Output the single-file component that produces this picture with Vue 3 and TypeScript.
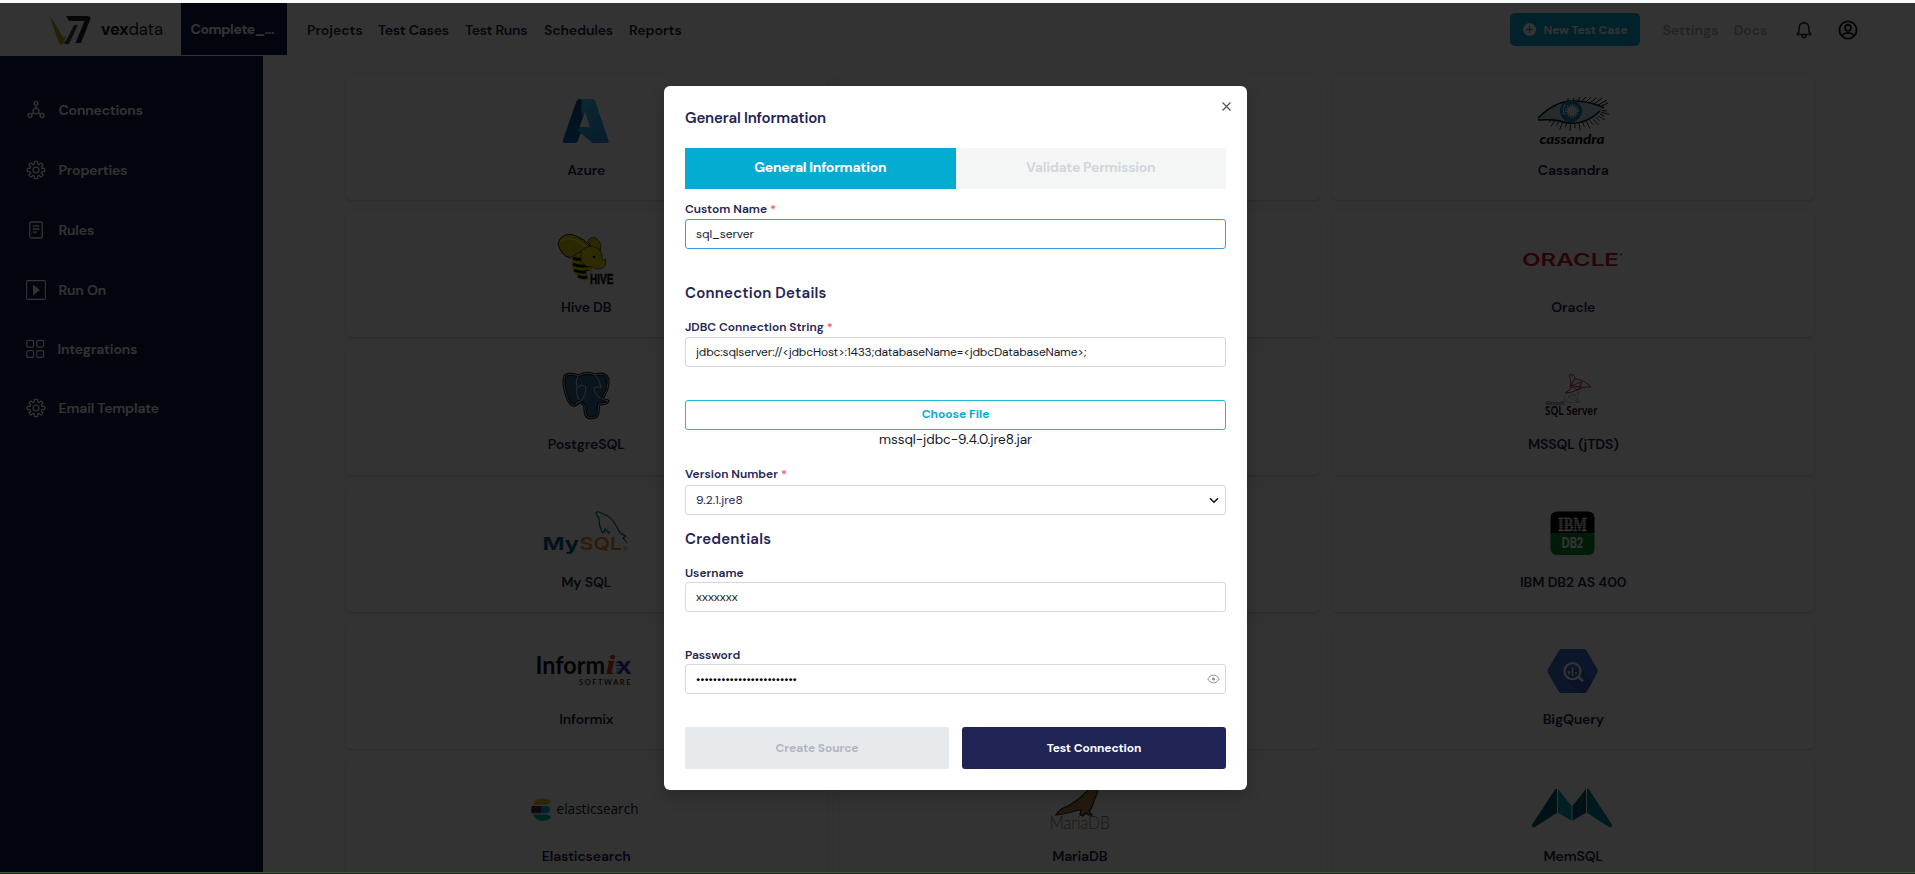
<script setup lang="ts">
import { ref } from 'vue'

interface NavItem {
  label: string
  width: number
  tracking: number
}

interface MenuItem {
  label: string
  icon: 'nodes' | 'gear' | 'doc' | 'play' | 'grid'
}

interface SourceCard {
  id: string
  label?: string
}

const nav: NavItem[] = [
  { label: 'Projects', width: 71, tracking: 0 },
  { label: 'Test Cases', width: 87, tracking: -0.2 },
  { label: 'Test Runs', width: 79, tracking: -0.25 },
  { label: 'Schedules', width: 85, tracking: -0.12 },
  { label: 'Reports', width: 60, tracking: 0 },
]

const menu: MenuItem[] = [
  { label: 'Connections', icon: 'nodes' },
  { label: 'Properties', icon: 'gear' },
  { label: 'Rules', icon: 'doc' },
  { label: 'Run On', icon: 'play' },
  { label: 'Integrations', icon: 'grid' },
  { label: 'Email Template', icon: 'gear' },
]

const cards: SourceCard[] = [
  { id: 'azure', label: 'Azure' },
  { id: 'blank1' },
  { id: 'cassandra', label: 'Cassandra' },
  { id: 'hive', label: 'Hive DB' },
  { id: 'blank2' },
  { id: 'oracle', label: 'Oracle' },
  { id: 'postgres', label: 'PostgreSQL' },
  { id: 'blank3' },
  { id: 'mssql', label: 'MSSQL (jTDS)' },
  { id: 'mysql', label: 'My SQL' },
  { id: 'blank4' },
  { id: 'db2', label: 'IBM DB2 AS 400' },
  { id: 'informix', label: 'Informix' },
  { id: 'blank5' },
  { id: 'bigquery', label: 'BigQuery' },
  { id: 'elastic', label: 'Elasticsearch' },
  { id: 'mariadb', label: 'MariaDB' },
  { id: 'memsql', label: 'MemSQL' },
]

const customName = ref('sql_server')
const jdbc = ref('jdbc:sqlserver://<jdbcHost>:1433;databaseName=<jdbcDatabaseName>;')
const version = ref('9.2.1.jre8')
const username = ref('xxxxxxx')
const password = ref('x'.repeat(24))

// Lower eyelashes fan out along the bottom lid.
const lashes = Array.from({ length: 17 }, (_, i) => {
  const a = (i / 16) * Math.PI * 0.72 + 0.1
  const x = 55 + Math.cos(a) * 29
  const y = 13 + Math.sin(a) * 14
  const len = i % 2 ? 8 : 5
  return `M${x.toFixed(1)} ${y.toFixed(1)}l${(Math.cos(a) * len).toFixed(1)} ${(Math.sin(a) * len).toFixed(1)}`
}).join('')

const gear = Array.from({ length: 8 }, (_, i) => {
  const p = (r: number, d: number) => {
    const a = ((i * 45 + d) * Math.PI) / 180
    return `${(10 + r * Math.cos(a)).toFixed(2)} ${(10 + r * Math.sin(a)).toFixed(2)}`
  }
  return `${i ? 'L' : 'M'}${p(6.4, -15)}L${p(8.6, -11)}Q${p(9, 0)} ${p(8.6, 11)}L${p(6.4, 15)}Q${p(5.6, 22.5)} ${p(6.4, 30)}`
}).join('') + 'Z'
</script>

<template>
  <div class="screen">
    <div class="top-strip"></div>
    <div class="page">
      <header class="header">
        <div class="brand">
          <svg width="42" height="30" viewBox="0 0 42 30">
            <path d="M0.5 1L5 7l9 15 3-1-2 7q-3 3-5 0Z" fill="#b3a61c" />
            <path d="M17 1H38q4.500 0 3 4L32 28h-5.500L35.500 6H20Z" fill="#20242c" />
            <path d="M25 10h4L20 29q-3 1-5-1l3-4Z" fill="#3b4048" />
          </svg>
          <span class="brand-name"><b>vex</b>data</span>
        </div>
        <div class="project">Complete_...</div>
        <nav class="nav">
          <span
            v-for="n in nav"
            :key="n.label"
            :style="{ width: n.width + 'px', letterSpacing: n.tracking + 'px' }"
          >{{ n.label }}</span>
        </nav>
        <div class="new-btn">
          <svg width="13" height="13" viewBox="0 0 13 13">
            <circle cx="6.5" cy="6.5" r="6.500" fill="#fff" />
            <path d="M6.500 3.200v6.600M3.200 6.500h6.600" stroke="#05acd1" stroke-width="1.200" />
          </svg>
          <span>New Test Case</span>
        </div>
        <span class="muted settings">Settings</span>
        <span class="muted docs">Docs</span>
        <svg class="bell" width="16" height="18" viewBox="0 0 16 18" fill="none" stroke="#1f2454" stroke-width="1.500" stroke-linejoin="round">
          <path d="M1 13.500h14q-2.200-2-2.200-4.500V6.600C12.800 3.500 10.700 2 8 2S3.200 3.500 3.200 6.600V9Q3.200 11.500 1 13.500ZM8 2V.5M6 14q0 2.700 2 2.700T10 14" />
        </svg>
        <svg class="user" width="20" height="20" viewBox="0 0 20 20" fill="none" stroke="#0b0f22" stroke-width="1.800">
          <circle cx="10" cy="10" r="8.600" /><circle cx="10" cy="7.800" r="3" /><path d="M4 16q1.500-3.200 6-3.200t6 3.200" />
        </svg>
      </header>

      <div class="body">
        <aside class="side">
          <div v-for="m in menu" :key="m.label" class="side-item" :class="m.icon">
            <svg width="20" height="20" viewBox="0 0 20 20" fill="none" stroke="#fff" stroke-width="1.300">
              <g v-if="m.icon === 'nodes'">
                <circle cx="10" cy="11" r="2.900" /><circle cx="10" cy="3.200" r="1.900" />
                <circle cx="4" cy="15.500" r="2" /><circle cx="16" cy="15.500" r="2" />
                <path d="M10 5.100V8M7.600 12.700l-2 1.500M12.400 12.700l2 1.500" />
              </g>
              <g v-else-if="m.icon === 'gear'">
                <path :d="gear" stroke-linejoin="round" /><circle cx="10" cy="10" r="2.900" />
              </g>
              <g v-else-if="m.icon === 'doc'">
                <rect x="3.700" y="2" width="12.600" height="16" rx="2" />
                <path d="M6.700 5.800h6.600M6.700 9h6.600M6.700 12.200h4.200" />
              </g>
              <g v-else-if="m.icon === 'play'">
                <rect x="0.600" y="0.600" width="18.800" height="18.800" rx="1.500" stroke-width="1.100" />
                <path d="M7 4.500L13.800 10 7 15.500Z" fill="#fff" stroke="none" />
              </g>
              <g v-else stroke-width="1.200">
                <rect x="0.800" y="1.300" width="6.800" height="6.800" rx="1.300" /><rect x="10.800" y="1.300" width="6.800" height="6.800" rx="1.300" />
                <rect x="0.800" y="11.600" width="6.800" height="6.800" rx="1.300" /><rect x="10.800" y="11.600" width="6.800" height="6.800" rx="1.300" />
              </g>
            </svg>
            <span>{{ m.label }}</span>
          </div>
        </aside>

        <main class="content">
          <div class="cards">
            <div v-for="c in cards" :key="c.id" class="card">
              <svg v-if="c.label" class="logo" width="110" height="56" viewBox="0 0 110 56">
                <g v-if="c.id === 'azure'">
                  <defs>
                    <linearGradient id="azA" x1="0.700" y1="0" x2="0.300" y2="1"><stop offset="0" stop-color="#114a8b" /><stop offset="1" stop-color="#0669bc" /></linearGradient>
                    <linearGradient id="azB" x1="0" y1="0" x2="0.500" y2="1"><stop offset="0" stop-color="#3ccbf4" /><stop offset="1" stop-color="#2892df" /></linearGradient>
                  </defs>
                  <path d="M48.500 3H62L47 44.500Q46 47 43.500 47H33.500Q31 47 31.800 44.500L45.500 5Q46.200 3 48.500 3Z" fill="url(#azA)" />
                  <path d="M45 31.500H65L62 46 46.500 35Q44 33 45 31.500Z" fill="#0078d4" />
                  <path d="M48 3H61.500Q63.500 3 64.200 5L77.500 44.500Q78.300 47 75.800 47H61.500L46.500 34 50 31h5.500L50 14 51 5Q50.500 3 48 3Z" fill="url(#azB)" />
                  <path d="M54 16L59 31H48.500Z" fill="#fff" />
                </g>
                <g v-else-if="c.id === 'cassandra'">
                  <path d="M20 22Q38 3 57 5Q75 6 85 12Q76 27 53 28Q38 27 30 24Z" fill="#b7dcee" />
                  <path d="M20 22Q38 4 57 5Q75 6 86 12M20 24Q40 23 45 26Q66 31 82 15" fill="none" stroke="#111" stroke-width="1.600" />
                  <path :d="lashes" stroke="#111" stroke-width="0.900" />
                  <path d="M64 5l4-4M68 6l5-5M72 7l6-5M76 8l8-6M80 9l9-5M83 10l7-3M60 5l2-4M55 5l1-3M50 5l0-3" stroke="#111" stroke-width="1" />
                  <circle cx="53" cy="15" r="11" fill="#1d7fb0" /><circle cx="54" cy="15" r="5" fill="#eee" />
                  <circle cx="54" cy="15" r="6" fill="none" stroke="#fff" stroke-width="2" stroke-dasharray="1 1.500" />
                  <path d="M47 8q-3 5-1 11" stroke="#fff" stroke-width="1" fill="none" />
                  <text x="21.500" y="48" font-family="Lato" font-weight="900" font-style="italic" font-size="14" textLength="65" lengthAdjust="spacingAndGlyphs" fill="#111">cassandra</text>
                </g>
                <g v-else-if="c.id === 'hive'">
                  <path d="M57 8q2-5 8-3 7 6 4 13L60 14Z" fill="#d8c80a" stroke="#333" stroke-width="0.800" />
                  <ellipse cx="51" cy="34" rx="9.500" ry="14" transform="rotate(-25 51 34)" fill="#e8d800" />
                  <path d="M42 25q7 3 15 0M42 31q8 4 17 1M43 37q8 4 15 1M47 43q6 3 11 0" fill="none" stroke="#111" stroke-width="3" />
                  <path d="M27 10Q30 1 40 1.300Q54 5 61 16Q48 18 39 25Q29 22 27 10Z" fill="#d8c80a" stroke="#222" stroke-width="1" />
                  <path d="M30 8q9-5 20 2 5 4 8 7" fill="none" stroke="#fff47a" stroke-width="1.200" />
                  <path d="M50 18q8-8 18-2 4 5 3 10 4 3 3 0 3 8-5 10-6 0-7-2-9 0-12-6Z" fill="#e8d800" stroke="#333" stroke-width="0.700" />
                  <circle cx="63" cy="24" r="1.300" fill="#111" />
                  <path d="M55 38l4 0 3 4-1 6-4-2Z" fill="#eee" />
                  <text x="59" y="50.500" font-family="Liberation Sans Narrow, Liberation Sans" font-weight="700" font-size="14" textLength="23.500" lengthAdjust="spacingAndGlyphs" fill="#111" stroke="#111" stroke-width="0.500">HIVE</text>
                </g>
                <g v-else-if="c.id === 'oracle'">
                  <text x="4" y="32.500" font-family="Inter" font-weight="600" font-size="17" textLength="97" lengthAdjust="spacingAndGlyphs" fill="#d3121b">ORACLE</text>
                  <circle cx="103" cy="21.500" r="1" fill="#d3121b" />
                </g>
                <g v-else-if="c.id === 'postgres'" stroke-linejoin="round">
                  <path d="M47 6Q39 2 34 6Q31 12 36 27Q40 37 44 35Q47 34 48 31Q54 35 54 36Q53 48 60 48Q66 48 67 43Q67 38 68 34Q76 34 77 31Q73 30 71 29Q78 18 77 9Q74 2 64 5Q56 1 47 6Z" fill="#336791" stroke="#111" stroke-width="3" />
                  <path d="M47 6Q39 2 34 6Q31 12 36 27Q40 37 44 35Q47 34 48 31Q54 35 54 36Q53 48 60 48Q66 48 67 43Q67 38 68 34Q76 34 77 31Q73 30 71 29Q78 18 77 9Q74 2 64 5Q56 1 47 6ZM47 6Q44 11 46 17Q45 26 48 30M46 17q7-3 9 0 0 8-4 13l-6 3M64 5Q69 10 70 18Q67 15 63 18q0 7 8 11" fill="none" stroke="#fff" stroke-width="0.800" />
                </g>
                <g v-else-if="c.id === 'mssql'">
                  <path d="M51 5q5-2 6 4 10 1 16 8-8-1-14 3-6 3-12 3 7-4 6-8 0-6-2-10ZM57 9l-5 7 8 4 4-8-12 4 12 1" fill="none" stroke="#c4262e" stroke-width="0.900" />
                  <path d="M51 5q2-2 5 0M53 22q-9 3-6 9 6 3 15 1-5-4 1-13M47 31l8-8 5 9-10-5 11-4" fill="none" stroke="#8a9698" stroke-width="0.600" />
                  <text x="27.500" y="35" font-family="Open Sans" font-size="4.500" textLength="19" fill="#555">Microsoft</text>
                  <text x="27" y="45" font-family="Noto Sans" font-size="13" textLength="52.500" lengthAdjust="spacingAndGlyphs" fill="#111">SQL Server</text>
                </g>
                <g v-else-if="c.id === 'mysql'">
                  <path d="M65 4q3-1 7 2 8 2 14 13 2 7 9 9l-3 2 4 5M65 4q0 3 3 6 0 7 2 11 1 5 3 3l1-3 4 4 1-2" fill="none" stroke="#00618a" stroke-width="1.200" stroke-linejoin="round" />
                  <text x="11.500" y="42.300" font-family="Inter" font-weight="700" font-size="17.500" textLength="36.500" lengthAdjust="spacingAndGlyphs" fill="#00618a">My</text>
                  <text x="48.500" y="42.300" font-family="Inter" font-weight="600" font-size="17.500" textLength="42.500" lengthAdjust="spacingAndGlyphs" fill="#e48e00">SQL</text>
                  <circle cx="94.200" cy="40.500" r="1.600" fill="none" stroke="#e48e00" stroke-width="0.800" />
                </g>
                <g v-else-if="c.id === 'db2'">
                  <path d="M32.500 25.400V10q0-6.600 6.600-6.600h30.800q6.600 0 6.600 6.600v15.400Z" fill="#000" />
                  <path d="M32.500 25.400h44v15q0 6.600-6.600 6.600H39.100q-6.600 0-6.600-6.600Z" fill="#00852b" />
                  <text x="40" y="22.500" font-family="Liberation Serif" font-weight="700" font-size="19" textLength="29" lengthAdjust="spacingAndGlyphs" fill="#fff" stroke="#fff" stroke-width="0.600">IBM</text>
                  <path d="M39 11.800h31M39 14h31M39 16.200h31M39 18.400h31M39 20.600h31" stroke="#000" stroke-width="0.600" />
                  <text x="43.500" y="39.500" font-family="Lato" font-weight="800" font-size="14" textLength="21.500" lengthAdjust="spacingAndGlyphs" fill="#fff">DB2</text>
                </g>
                <g v-else-if="c.id === 'informix'">
                  <text x="4.500" y="29" font-family="Lato" font-weight="700" font-size="25" textLength="69.500" lengthAdjust="spacingAndGlyphs" fill="#16161a">Inform</text>
                  <text x="74.500" y="29" font-family="Liberation Serif" font-style="italic" font-weight="700" font-size="28" textLength="10" lengthAdjust="spacingAndGlyphs" fill="#e1371d">i</text>
                  <text x="86" y="29" font-family="Lato" font-weight="900" font-size="25" textLength="14" lengthAdjust="spacingAndGlyphs" fill="#1d3fa8">x</text>
                  <path d="M85 17.500h5M85 20.500h5M85 24h4M85 27h3" stroke="#1d3fa8" stroke-width="1" />
                  <text x="48" y="40" font-family="Lato" font-size="7.500" textLength="51.500" fill="#222">SOFTWARE</text>
                </g>
                <g v-else-if="c.id === 'bigquery'">
                  <path d="M43 4H66.500L68.500 5.500 79.500 24.500V27.500L68.500 47 66.500 48H43L41 47 29.700 27.500V24.500L41 5.500Z" fill="#3a6fd0" />
                  <path d="M47 33l15 15h4.500l2-1 6-10.500L61 22Z" fill="#2f5fb8" />
                  <circle cx="54.500" cy="26.200" r="8" fill="none" stroke="#fff" stroke-width="2.200" />
                  <path d="M60.500 32l4.500 4.300" stroke="#fff" stroke-width="2.600" />
                  <path d="M51 26v3.500M54.500 22.500v8.500M58 27v2.500" stroke="#fff" stroke-width="1.600" />
                </g>
                <g v-else-if="c.id === 'elastic'">
                  <path d="M1.800 22.700Q5 16.300 11.300 16.300Q17.300 16.300 20 20Q18 22.700 15 22.700Z" fill="#f0bf1a" />
                  <path d="M0.600 24H10v7.200H0.600Q-0.200 27.500 0.600 24Z" fill="#343741" /><path d="M10 24h6q3 .5 3 3.600t-3 3.600H10Z" fill="#07a5de" />
                  <path d="M1.800 32.500H15Q18 32.500 20 35Q17.500 38.800 11.500 38.800Q5 38.800 1.800 32.500Z" fill="#00b3a6" />
                  <text x="25.500" y="31.800" font-family="Open Sans" font-weight="500" font-size="14.500" textLength="82" lengthAdjust="spacingAndGlyphs" fill="#16161a">elasticsearch</text>
                </g>
                <g v-else-if="c.id === 'mariadb'">
                  <path d="M31 33q3-6 12-9 7-4 13-9 6-7 11-9 6-4 9-2l-3 3q-1 6-4 12-2 8-5 10l3 4q-3 1-6-2l-3 3-3-1 1-5q-5 0-9 2l-9 2Z" fill="#b07c4a" stroke="#1b2433" stroke-width="1.200" />
                  <text x="24.500" y="47" font-family="Lato" font-weight="300" font-size="17.500" textLength="60.500" lengthAdjust="spacingAndGlyphs" fill="#a07040">MariaDB</text>
                </g>
                <g v-else>
                  <path d="M39 6.800V30.700L16.500 45.200Q13.500 45.500 14 42.700L37 7.500Q38 6.500 39 6.800Z" fill="#045c79" />
                  <path d="M40 7L53.500 24V38.700L40 30.700Z" fill="#009ebc" />
                  <path d="M54.500 24L68 7V30.700L54.500 38.700Z" fill="#045c79" />
                  <path d="M69 6.800Q70 6.500 71 7.500L94 42.700Q94.500 45.500 91.500 45.200L69 30.700Z" fill="#00809c" />
                </g>
              </svg>
              <div v-if="c.label" class="card-label">{{ c.label }}</div>
            </div>
          </div>
        </main>
        <div class="gutter"></div>
      </div>
    </div>
    <div class="foot"></div>

    <div class="overlay">
      <section class="modal">
        <svg class="close" width="11" height="11" viewBox="0 0 11 11"><path d="M1.500 1.500l8 8M9.500 1.500l-8 8" stroke="#4b5563" stroke-width="1.200" /></svg>
        <h1>General Information</h1>
        <div class="tabs">
          <div class="tab active">General Information</div>
          <div class="tab">Validate Permission</div>
        </div>

        <label class="first">Custom Name <i>*</i></label>
        <input v-model="customName" class="field focused" type="text" />

        <h2>Connection Details</h2>
        <label class="sub">JDBC Connection String <i>*</i></label>
        <input v-model="jdbc" class="field jdbc" type="text" />

        <button class="choose" type="button">Choose File</button>
        <div class="file">mssql-jdbc-9.4.0.jre8.jar</div>

        <label class="ver">Version Number <i>*</i></label>
        <div class="field select">
          <span>{{ version }}</span>
          <svg width="10" height="7" viewBox="0 0 10 7"><path d="M1 1.200l4 4 4-4" fill="none" stroke="#111" stroke-width="1.500" /></svg>
        </div>

        <h2 class="cred">Credentials</h2>
        <label class="sub short">Username</label>
        <input v-model="username" class="field user-field" type="text" />

        <label class="pass short">Password</label>
        <div class="pass-wrap">
          <input v-model="password" class="field dots" type="password" />
          <svg class="eye" width="13" height="10" viewBox="0 0 13 10" fill="none" stroke="#8a929c">
            <path d="M.7 5Q3 1 6.500 1t5.800 4Q10 9 6.500 9T.7 5Z" /><circle cx="6.500" cy="5" r="1.600" fill="#8a929c" stroke="none" />
          </svg>
        </div>

        <div class="actions">
          <button class="btn disabled" type="button">Create Source</button>
          <button class="btn primary" type="button">Test Connection</button>
        </div>
      </section>
    </div>
  </div>
</template>

<style>
html,
body {
  overflow: hidden;
}
</style>

<style scoped>
* {
  box-sizing: border-box;
}
.screen {
  position: relative;
  width: 1915px;
  height: 874px;
  overflow: hidden;
  font-family: 'DM Sans', Inter, 'Open Sans', sans-serif;
  font-size: 14px;
  font-weight: 600;
  color: #1f2454;
  background: #fff;
}
.top-strip {
  height: 3px;
  background: #f5fbf8;
}
.page {
  display: flex;
  flex-direction: column;
  height: 869px;
}
.header {
  display: flex;
  align-items: center;
  flex: none;
  height: 53px;
  background: #fff;
}
.brand {
  display: flex;
  align-items: center;
  gap: 10px;
  width: 181px;
  padding-left: 49px;
}
.brand-name {
  font-size: 16.500px;
  font-weight: 400;
  letter-spacing: -0.050px;
  color: #16191f;
}
.brand-name b {
  font-weight: 700;
}
.project {
  width: 106px;
  height: 52px;
  margin-bottom: 1px;
  padding-left: 9.500px;
  line-height: 53px;
  color: #fff;
  background: #0a1c48;
  font-weight: 700;
  letter-spacing: -0.4px;
}
.nav {
  display: flex;
  margin-left: 20px;
  white-space: nowrap;
}
.nav span {
  flex: none;
}
.new-btn {
  display: flex;
  align-items: center;
  width: 130px;
  height: 33px;
  margin-left: 821px;
  padding-left: 13px;
  gap: 7.500px;
  border-radius: 5px;
  background: #05acd1;
  color: #fff;
  font-size: 12px;
  font-weight: 700;
  letter-spacing: -0.1px;
  white-space: nowrap;
}
.muted {
  color: #b3b6be;
}
.settings {
  width: 71px;
  margin-left: 22.500px;
}
.docs {
  width: 62.500px;
}
.user {
  margin-left: 26px;
}
.body {
  display: flex;
  flex: 1;
  min-height: 0;
  background: #fff;
}
.side {
  flex: none;
  width: 263px;
  padding-top: 44px;
  background: #0a1b45;
  color: #fff;
  letter-spacing: -0.150px;
}
.side-item {
  display: flex;
  align-items: center;
  gap: 12.500px;
  height: 20px;
  margin: 0 0 40px;
  padding-left: 26px;
}
.side-item span {
  line-height: 18px;
  padding-bottom: 1px;
}
.side-item.play,
.side-item.grid {
  margin-bottom: 39px;
}
.side-item.grid span {
  margin-left: -1px;
}
.content {
  flex: 1;
  min-width: 0;
  padding: 20px 0 0 83px;
  overflow: hidden;
  background: #fafafa;
}
.gutter {
  width: 18px;
  background: #fdfdfd;
}
.cards {
  display: grid;
  grid-template-columns: repeat(3, 480.500px);
  grid-auto-rows: 124.200px;
  gap: 13px 13px;
}
.card {
  display: flex;
  flex-direction: column;
  align-items: center;
  padding-top: 20px;
  border-radius: 5px;
  background: #fff;
  box-shadow: 0 1px 2px rgba(0, 0, 0, 0.16);
}
.logo {
  flex: none;
  overflow: visible;
}
.card-label {
  margin-top: 8px;
  line-height: 20px;
  letter-spacing: -0.130px;
  white-space: nowrap;
}
.foot {
  height: 2px;
  border-top: 1px solid #3f593d;
  background: #1b2e19;
}
.overlay {
  position: absolute;
  inset: 3px 0 2px;
  display: flex;
  justify-content: center;
  align-items: flex-start;
  padding: 83px 4px 0 0;
  background: rgba(0, 0, 0, 0.8);
}
.modal {
  position: relative;
  flex: none;
  width: 583px;
  height: 704px;
  padding: 22px 21px 0;
  border-radius: 6px;
  background: #fff;
  box-shadow: 0 6px 16px rgba(0, 0, 0, 0.2);
}
.close {
  position: absolute;
  top: 15px;
  right: 15px;
}
h1,
h2 {
  margin: 0;
  line-height: 20px;
  font-size: 15px;
  font-weight: 600;
}
h1 {
  letter-spacing: -0.180px;
}
h2 {
  margin-top: 34px;
  letter-spacing: 0.220px;
}
h2.cred {
  margin-top: 14px;
}
.tabs {
  display: flex;
  height: 41px;
  margin-top: 20px;
}
.tab {
  flex: 1;
  line-height: 39px;
  text-align: center;
  font-weight: 700;
  letter-spacing: -0.300px;
  color: #d3d7db;
  background: #f4f6f6;
}
.tab.active {
  letter-spacing: -0.270px;
  color: #fff;
  background: #05acd1;
}
label {
  display: block;
  height: 18px;
  line-height: 17px;
  font-size: 12px;
}
label i {
  font-style: normal;
  color: #f55;
}
label.first {
  margin-top: 12px;
}
label.sub {
  margin-top: 16px;
}
label.ver {
  height: 19px;
  margin-top: 18px;
}
label.pass {
  margin-top: 35px;
}
label.short {
  height: 17px;
}
.field {
  display: block;
  width: 100%;
  height: 30px;
  padding: 0 10px;
  border: 1px solid #d3d9df;
  border-radius: 3px;
  outline: none;
  background: #fff;
  font: 400 12px/28px 'DM Sans', Inter, 'Open Sans', sans-serif;
  letter-spacing: -0.080px;
  color: #16191f;
}
.focused {
  border-color: #4299e1;
}
.jdbc {
  letter-spacing: -0.140px;
}
.select {
  display: flex;
  align-items: center;
  justify-content: space-between;
  padding-right: 6.500px;
  letter-spacing: 0.100px;
  color: #1f2454;
}
.user-field {
  letter-spacing: 0;
}
.pass-wrap {
  position: relative;
}
.dots {
  letter-spacing: -0.120px;
  color: #000;
}
.eye {
  position: absolute;
  top: 10px;
  right: 6.500px;
}
.choose {
  display: block;
  width: 100%;
  height: 30px;
  margin-top: 33px;
  padding: 0 0 2px;
  border: 1px solid #22b8d6;
  border-radius: 3px;
  background: #fff;
  color: #05acd1;
  font: 700 12px 'DM Sans', Inter, 'Open Sans', sans-serif;
}
.file {
  height: 18px;
  line-height: 20px;
  text-align: center;
  font-size: 13.500px;
  font-weight: 400;
  letter-spacing: -0.050px;
  color: #16191f;
}
.actions {
  display: flex;
  gap: 13px;
  margin-top: 33px;
}
.btn {
  flex: 1;
  height: 42px;
  padding: 0 0 1px;
  border: 0;
  border-radius: 3px;
  font: 700 12px 'DM Sans', Inter, 'Open Sans', sans-serif;
  letter-spacing: -0.100px;
}
.disabled {
  background: #e7eaed;
  color: #b0b6bf;
}
.primary {
  background: #1f2454;
  color: #fff;
}
</style>
